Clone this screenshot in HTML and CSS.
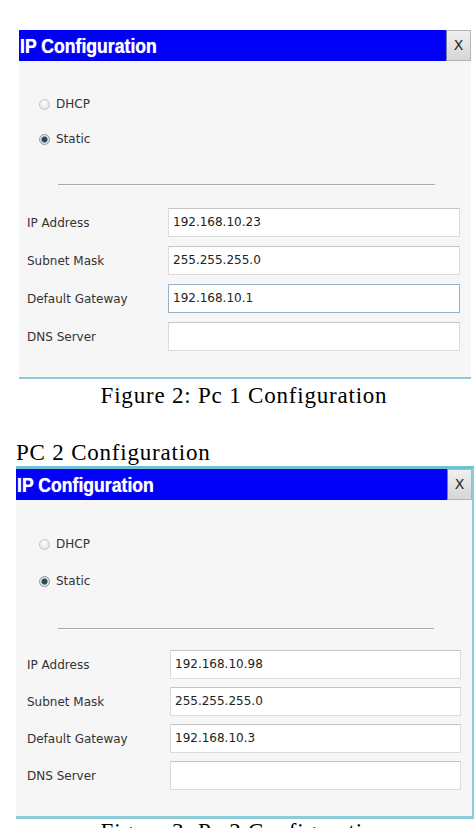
FILE: index.html
```html
<!DOCTYPE html>
<html lang="en">
<head>
  <meta charset="UTF-8" />
  <title>PC Configuration</title>
  <link rel="stylesheet" href="styles.css">
</head>
<body>
  <div class="window pc1">
    <div class="titlebar">
      <div class="title"><span>IP Configuration</span></div>
      <div class="close">X</div>
    </div>
    <div class="panel">
      <div class="modes">
        <div class="mode"><span class="radio"></span>DHCP</div>
        <div class="mode"><span class="radio checked"></span>Static</div>
      </div>
      <div class="sep"></div>
      <div class="fields">
        <div class="label">IP Address</div>
        <div class="field">192.168.10.23</div>
        <div class="label">Subnet Mask</div>
        <div class="field">255.255.255.0</div>
        <div class="label">Default Gateway</div>
        <div class="field focus">192.168.10.1</div>
        <div class="label">DNS Server</div>
        <div class="field"></div>
      </div>
    </div>
  </div>
  <p class="caption">Figure 2: Pc 1 Configuration</p>

  <p class="heading">PC 2 Configuration</p>
  <div class="window pc2">
    <div class="titlebar">
      <div class="title"><span>IP Configuration</span></div>
      <div class="close">X</div>
    </div>
    <div class="panel">
      <div class="modes">
        <div class="mode"><span class="radio"></span>DHCP</div>
        <div class="mode"><span class="radio checked"></span>Static</div>
      </div>
      <div class="sep"></div>
      <div class="fields">
        <div class="label">IP Address</div>
        <div class="field">192.168.10.98</div>
        <div class="label">Subnet Mask</div>
        <div class="field">255.255.255.0</div>
        <div class="label">Default Gateway</div>
        <div class="field">192.168.10.3</div>
        <div class="label">DNS Server</div>
        <div class="field"></div>
      </div>
    </div>
  </div>
  <p class="caption">Figure 3: Pc 2 Configuration</p>
</body>
</html>
```

FILE: styles.css
```css
* { margin: 0; padding: 0; box-sizing: border-box; }
body {
  background: #fff;
  color: #000;
  font-family: "Liberation Serif", "Times New Roman", serif;
  overflow: hidden;
}

/* dialog window */
.window { background: #f6f6f6; }
.pc1 {
  margin: 30px 0 0 19px;
  width: 452px;
  border-bottom: 2px solid #8fcad8;
}
.pc2 {
  margin-left: 16px;
  width: 458px;
  border-top: 3px solid #6fc2d4;
  border-right: 2px solid #8fcad8;
  border-bottom: 3px solid #8fcad8;
}
.titlebar {
  display: flex;
  height: 31px;
  background: #fff;
}
.title {
  flex: 1;
  background: #0000f6;
  color: #fff;
  font-family: "Liberation Sans", Arial, sans-serif;
  font-weight: bold;
  font-size: 21px;
  line-height: 31px;
  padding-left: 1px;
  text-shadow: 0 0 1px #c8c8ff;
  white-space: nowrap;
}
.title span {
  display: inline-block;
  transform: scaleX(0.84);
  transform-origin: left center;
}
.close {
  width: 25px;
  background: linear-gradient(#f0f0f0, #d6d6d6);
  border: 1px solid #b4b4b4;
  border-left: 1px solid #7a7a9a;
  color: #222;
  font-family: "DejaVu Sans", sans-serif;
  font-size: 14px;
  text-align: center;
  line-height: 28px;
}

/* panel body */
.panel {
  height: 316px;
  padding: 34px 11px 0 8px;
  font-family: "DejaVu Sans", Tahoma, sans-serif;
  font-size: 12px;
  color: #333;
}
.pc2 .panel { padding: 35px 11px 0 11px; }
.modes {
  display: flex;
  flex-direction: column;
  gap: 17px;
  padding-left: 12px;
}
.pc2 .modes { gap: 19px; padding-left: 12px; }
.mode {
  display: flex;
  align-items: center;
  gap: 6px;
  height: 18px;
}
.radio {
  width: 11px;
  height: 11px;
  border-radius: 50%;
  border: 1px solid #c4c4c4;
  background: radial-gradient(circle at 40% 35%, #fff, #dcdcdc);
}
.radio.checked {
  border-color: #8a9aa0;
  background: radial-gradient(circle, #2b4a55 0, #2b4a55 2.5px, #d8e0e2 3.5px, #eef2f2 100%);
}
.sep {
  margin: 36px 25px 0 31px;
  height: 2px;
  border-top: 1px solid #a8a8a8;
  border-bottom: 1px solid #fff;
}
.pc2 .sep { margin: 38px 27px 0 31px; }

/* address rows */
.fields {
  display: grid;
  grid-template-columns: 141px 292px;
  grid-auto-rows: 29px;
  row-gap: 9px;
  margin-top: 22px;
  align-items: center;
}
.pc2 .fields { margin-top: 20px; grid-template-columns: 143px 291px; row-gap: 8px; }
.label { color: #333; }
.field {
  height: 29px;
  background: #fff;
  border: 1px solid #dcdcdc;
  border-top-color: #c4c4c4;
  padding: 0 4px;
  line-height: 27px;
  color: #222;
}
.field.focus { border-color: #9cb0c4; }

/* captions */
.caption {
  font-size: 23px;
  letter-spacing: 0.8px;
  line-height: 26px;
  text-align: center;
  padding-left: 14px;
  margin-top: 4px;
}
.pc2 + .caption { margin-top: 0; }
.heading {
  font-size: 23px;
  letter-spacing: 0.8px;
  line-height: 26px;
  margin: 31px 0 0 16px;
}
```
